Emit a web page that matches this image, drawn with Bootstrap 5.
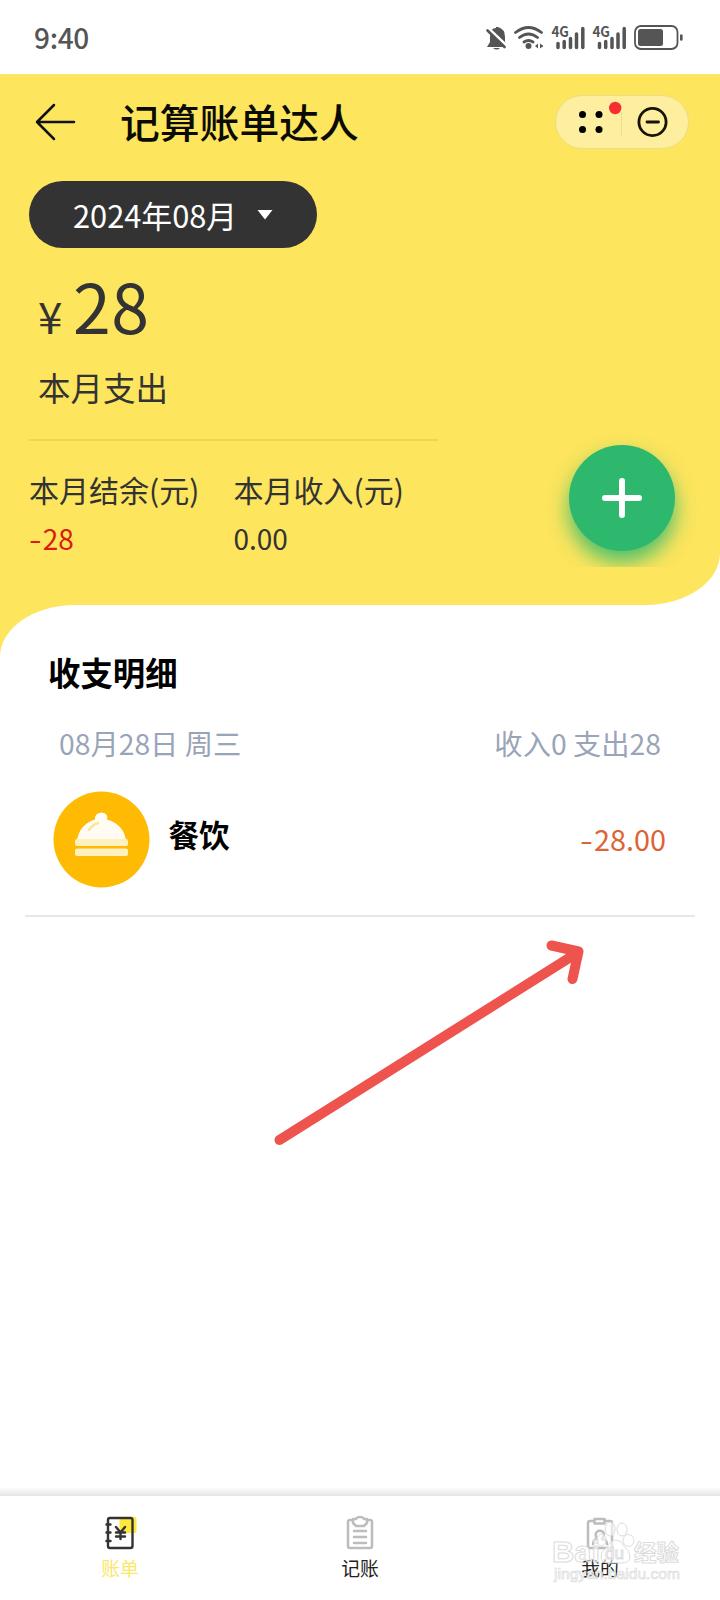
<!DOCTYPE html>
<html lang="zh-CN">
<head>
<meta charset="utf-8">
<meta name="viewport" content="width=device-width, initial-scale=1">
<title>记算账单达人</title>
<link href="https://cdn.jsdelivr.net/npm/bootstrap@5.3.0/dist/css/bootstrap.min.css" rel="stylesheet">
<style>
  :root { --sun: #fde55d; --ink: #333; }
  body { font-family: "Noto Sans CJK SC", sans-serif; width: 720px; height: 1600px; overflow: hidden; background: #fff; color: var(--ink); }
  svg { display: block; flex: none; }
  .status-bar { height: 74px; padding: 0 36px 0 34px; color: #555; font-size: 28px; font-weight: 500; line-height: 76px; letter-spacing: -.3px; }
  .hero { height: 531px; background: var(--sun); border-bottom-right-radius: 75px 52px; }
  .title-bar { height: 96px; padding: 0 31px 0 35px; }
  .app-title { font-size: 39.8px; line-height: 92px; font-weight: 500; color: #0b0b05; margin: -2px 0 0 44px; }
  .capsule { width: 134px; height: 54px; border-radius: 27px; background: #feee9f; border: 1px solid #eddc84; }
  .month-pill { width: 288px; height: 67px; margin: 11px 0 0 29px; padding: 0 44px; border-radius: 34px; background: #333; color: #fff; font-size: 30.8px; line-height: 66px; }
  .total { margin: 6px 0 0 38px; height: 100px; line-height: 101px; font-size: 68px; letter-spacing: .5px; }
  .total small { font-size: 44px; margin-right: 10px; }
  .total-label { margin-left: 38px; height: 64px; line-height: 66px; font-size: 32.5px; }
  .stats { width: 409px; margin: 21px 0 0 29px; border-top: 2px solid #ecd654; padding-top: 28px; }
  .stat-item { width: 204.5px; flex: none; font-size: 30px; line-height: 40px; white-space: nowrap; }
  .stat-num { font-size: 28px; margin-top: 9px; }
  .dash { display: inline-block; transform: scaleX(1.3); transform-origin: left; margin-right: 4px; }
  .fab-wrap { width: 156px; height: 149px; padding: 27px 0 0 25px; margin-right: 20px; overflow: hidden; }
  .fab { width: 106px; height: 106px; border-radius: 50%; background: #2db86e; box-shadow: 0 11px 20px rgba(45,184,110,.85); }
  .sheet-back { background: linear-gradient(var(--sun) 60px, #fff 60px); }
  .sheet { height: 890px; background: #fff; border-top-left-radius: 75px 52px; padding-top: 42px; }
  .list-title { margin: 0 0 0 48px; font-size: 32.4px; line-height: 50px; font-weight: 700; color: #000; }
  .day-row { margin: 21px 59px 0 59px; font-size: 28.3px; line-height: 50px; color: #9aa4b8; }
  .bill { height: 149px; margin: 0 25px; padding: 23px 29px 0 27.5px; border-bottom: 2px solid #e8e8e8; }
  .bill-name { margin: 3px 0 0 19px; font-size: 30.5px; line-height: 80px; font-weight: 700; color: #000; }
  .bill-sum { font-size: 28.8px; line-height: 96px; color: #dd6434; }
  .pointer { margin: 19px 0 0 270px; }
  .tab-shade { height: 9px; margin-top: -8px; background: linear-gradient(#fff, #e4e4e4); }
  .tabs { height: 104px; background: #fff; }
  .tab-item { width: 240px; padding-top: 18px; font-size: 18.8px; line-height: 30px; color: #222; }
  .tab-item span { margin-top: 3px; }
  .tab-item.current { color: #f9e86d; }
  .brand-mark { left: 548px; top: 1514px; }
</style>
</head>
<body class="position-relative">
  <div class="status-bar d-flex justify-content-between align-items-center">
    <span>9:40</span>
    <svg width="200" height="30" viewBox="484 22 200 30" fill="#555" stroke-linecap="round">
      <path d="M487 47l3-5V37Q490 28 496 28V27h2q7 2 7 10v5l2 5ZM493 48h7q-3 3-7 0Z"/>
      <path d="M488.500 28.500l18 17" stroke="#fff" stroke-width="3" />
      <path d="M487.500 30.500l17 16.500" stroke="#555" stroke-width="2.600"/>
      <g fill="none" stroke="#555" stroke-width="2.800"><path d="M515.500 32.500q13-10 26 0M519.500 37.500q9-7 18 0M524 42q4.500-3 9 0"/></g>
      <circle cx="528.500" cy="46" r="3"/>
      <path d="M538 43.500v5l-3-2.500ZM540 43.500v5l3.500-2.500Z"/>
      <g stroke="#555" stroke-width="3.500"><path d="M558 43.500v4M564.200 41.500v6M570.500 38.500v9M576.500 34v13.500M582.800 28.500v19"/><path d="M599.500 43.500v4M605.700 41.500v6M612 38.500v9M618 34v13.500M624.200 28.500v19"/></g>
      <text x="551.500" y="37" font-size="14" font-weight="700" font-family="Noto Sans CJK SC, sans-serif" textLength="17" lengthAdjust="spacingAndGlyphs">4G</text>
      <text x="592.500" y="37" font-size="14" font-weight="700" font-family="Noto Sans CJK SC, sans-serif" textLength="17" lengthAdjust="spacingAndGlyphs">4G</text>
      <rect x="635" y="26" width="42.500" height="23" rx="6" fill="none" stroke="#555" stroke-width="1.800"/>
      <rect x="638" y="29" width="25" height="17" rx="2.500"/>
      <path d="M681.300 35.500v4" stroke="#555" stroke-width="2.600"/>
    </svg>
  </div>

  <header class="hero">
    <nav class="title-bar d-flex align-items-center">
      <svg width="41" height="38" fill="none" stroke="#111" stroke-width="2.500" stroke-linecap="round" stroke-linejoin="round"><path d="M19 2L2 19l17 17M2 19h37"/></svg>
      <h1 class="app-title">记算账单达人</h1>
      <div class="capsule ms-auto">
        <svg width="132" height="52"><g><circle cx="26.500" cy="18.500" r="3.500"/><circle cx="43" cy="18.500" r="3.500"/><circle cx="26.500" cy="33.500" r="3.500"/><circle cx="43" cy="33.500" r="3.500"/></g><path d="M65.500 16v24" stroke="#eedf90"/><circle cx="59.200" cy="12" r="6.200" fill="#f52e32"/><circle cx="96.500" cy="26" r="13.600" fill="none" stroke="#171303" stroke-width="2.800"/><path d="M91 26h11.500" stroke="#171303" stroke-width="2.800" stroke-linecap="round"/></svg>
      </div>
    </nav>
    <div class="month-pill d-flex align-items-center justify-content-between"><span>2024年08月</span><svg width="16" height="10" fill="#fff"><path d="M.5 0h15L8 9.500Z"/></svg></div>
    <div class="total"><small>¥</small>28</div>
    <div class="total-label">本月支出</div>
    <div class="d-flex justify-content-between">
      <div class="stats d-flex">
        <div class="stat-item"><div>本月结余(元)</div><div class="stat-num" style="color:#d91c0b"><span class="dash">-</span>28</div></div>
        <div class="stat-item"><div>本月收入(元)</div><div class="stat-num">0.00</div></div>
      </div>
      <div class="fab-wrap"><div class="fab d-flex align-items-center justify-content-center"><svg width="42" height="42" stroke="#fff" stroke-width="6" stroke-linecap="round"><path d="M21 4v34M4 21h34"/></svg></div></div>
    </div>
  </header>

  <main class="sheet-back">
    <div class="sheet">
      <h2 class="list-title">收支明细</h2>
      <div class="day-row d-flex justify-content-between"><span>08月28日 周三</span><span>收入0 支出28</span></div>
      <div class="bill d-flex">
        <svg width="97" height="97" viewBox="0 0 97 97"><circle cx="48.500" cy="48.500" r="48" fill="#ffba03"/>
          <path d="M24 49Q27 33 42 28.500Q41.500 22 48.500 21.500Q55.500 22 54 28.500Q70 33 73 49Z" fill="#fffdf3"/>
          <path d="M36 39q3-5 9-7" fill="none" stroke="#ffe39b" stroke-width="2.400" stroke-linecap="round"/>
          <rect x="22" y="48" width="53" height="7" rx="2" fill="#fff0bf"/><rect x="22" y="57.500" width="53" height="7.500" rx="2" fill="#fff0bf"/>
        </svg>
        <div class="bill-name">餐饮</div>
        <div class="bill-sum ms-auto"><span class="dash">-</span>28.00</div>
      </div>
      <svg class="pointer" width="320" height="212" viewBox="270 936 320 212" fill="none" stroke="#ef534e" stroke-width="10" stroke-linecap="round" stroke-linejoin="round"><path d="M279.500 1140L577 953M551.500 945.500L578.500 951.500L572.500 979"/></svg>
    </div>
  </main>

  <div class="tab-shade position-relative"></div>
  <footer class="tabs position-relative d-flex text-center">
    <div class="tab-item current d-flex flex-column align-items-center">
      <svg width="34" height="36" viewBox="103.5 1514 34 36" fill="none" stroke="#333" stroke-width="2.400" stroke-linecap="round" stroke-linejoin="round"><rect x="120" y="1517" width="17" height="16" rx="2" fill="#ffe83c" stroke="none"/><rect x="108.500" y="1518" width="24.500" height="30" rx="2"/><path d="M107 1524.500h4M107 1532.500h4M107 1541h4M116.500 1527l4.500 5.500 4.500-5.500M116.500 1532.500h9M116.500 1536.500h9M121 1532.500v6.500"/></svg>
      <span>账单</span>
    </div>
    <div class="tab-item d-flex flex-column align-items-center">
      <svg width="34" height="36" viewBox="343 1514 34 36" fill="none" stroke="#bdbdbd" stroke-width="2.500" stroke-linecap="round" stroke-linejoin="round"><path d="M353 1520h-3q-2 0-2 2v24q0 2 2 2h20q2 0 2-2v-24q0-2-2-2h-3M353 1519h3q1-2 4-2t4 2h3v4l-3 3h-8l-3-3ZM354 1531h12M354 1537h12M354 1543h12"/></svg>
      <span>记账</span>
    </div>
    <div class="tab-item d-flex flex-column align-items-center">
      <svg width="34" height="36" viewBox="583 1514 34 36" fill="none" stroke="#bdbdbd" stroke-width="2.500" stroke-linecap="round" stroke-linejoin="round"><path d="M594 1521h-4q-2 0-2 2v23q0 2 2 2h20q2 0 2-2v-23q0-2-2-2h-4M594.500 1519h10v4.500h-10ZM593 1544q0-4 4-5-3-6 1-8 6-1 6 4-1 3-2 4 5 1 5 5"/></svg>
      <span>我的</span>
    </div>
  </footer>

  <svg class="brand-mark position-absolute" width="140" height="72" viewBox="548 1514 140 72" fill="#fff" fill-opacity=".6" stroke="#dcdcdc" stroke-width="1" font-family="Liberation Sans, sans-serif">
    <ellipse cx="610" cy="1529" rx="5" ry="7"/><ellipse cx="622" cy="1529.500" rx="5" ry="6.500"/><ellipse cx="628.500" cy="1540.500" rx="5.500" ry="6"/><ellipse cx="601.500" cy="1540" rx="4.500" ry="6"/>
    <path d="M601 1556q0-5 6-9 4-7 9-7t8 6q6 5 6 11 0 6-8 6h-14q-7 0-7-7Z"/>
    <text x="552" y="1562" font-size="29" font-weight="700" textLength="48" lengthAdjust="spacingAndGlyphs">Bai</text>
    <text x="605" y="1559" font-size="17">du</text>
    <text x="634" y="1561" font-size="22.500" font-weight="700" font-family="Noto Sans CJK SC, sans-serif">经验</text>
    <text x="554" y="1579" font-size="15" stroke-width=".7" textLength="126" lengthAdjust="spacingAndGlyphs">jingyan.baidu.com</text>
  </svg>
<script src="https://cdn.jsdelivr.net/npm/bootstrap@5.3.0/dist/js/bootstrap.bundle.min.js"></script>
</body>
</html>
